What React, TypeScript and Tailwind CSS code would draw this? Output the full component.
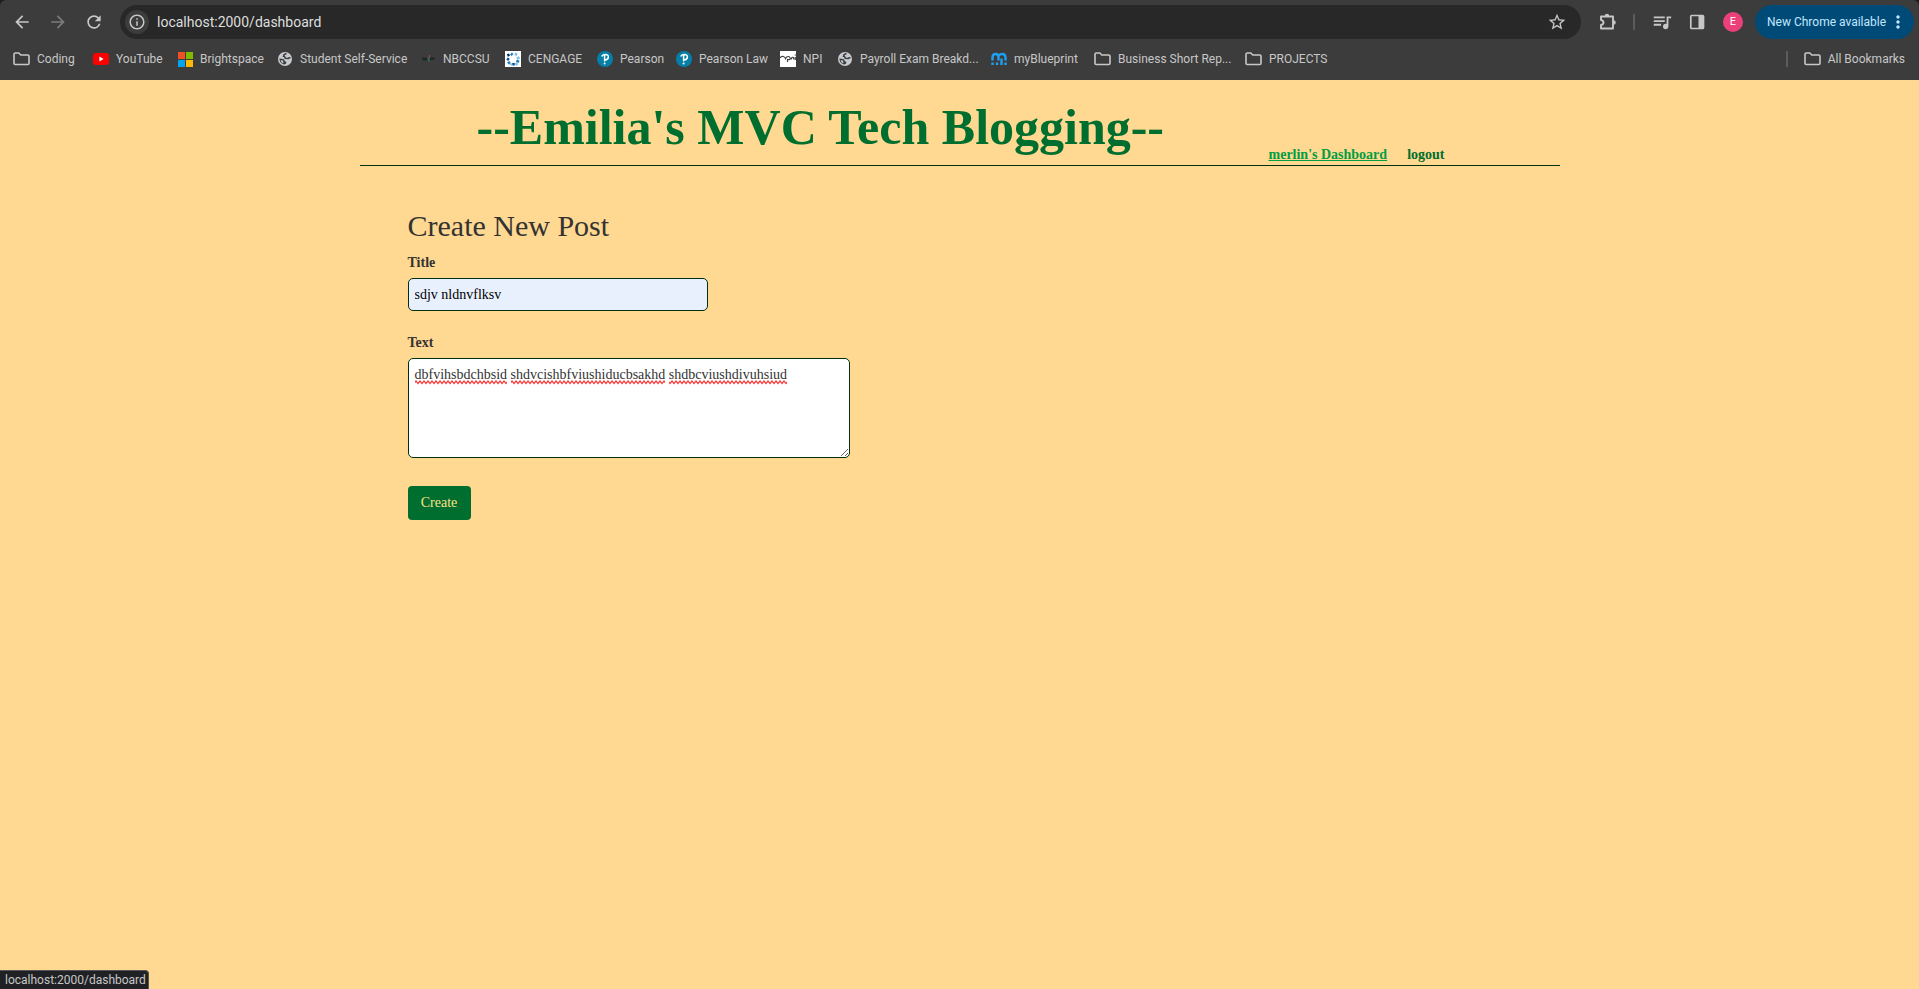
import { ReactNode } from "react";
import { MdArrowBack, MdArrowForward, MdRefresh, MdInfoOutline, MdStarOutline, MdQueueMusic, MdMoreVert } from "react-icons/md";

function Folder() {
  return (
    <svg viewBox="0 0 17 14" className="h-[14px] w-[17px]" fill="none" stroke="#c7c7c7" strokeWidth="1.6">
      <path d="M1 2.2Q1 1 2.2 1H5.8L7.800 3H14.8Q16 3 16 4.2V11.3Q16 12.500 14.800 12.500H2.2Q1 12.500 1 11.300Z" />
    </svg>
  );
}

function YouTube() {
  return (
    <svg viewBox="0 0 16 12" className="h-3 w-4">
      <rect width="16" height="12" rx="3" fill="#f00" />
      <path d="M6.4 3.5 10.6 6 6.4 8.5Z" fill="#fff" />
    </svg>
  );
}

function Microsoft() {
  return (
    <svg viewBox="0 0 15 15" className="h-[15px] w-[15px]">
      <rect width="7" height="7" fill="#f25022" />
      <rect x="8" width="7" height="7" fill="#7fba00" />
      <rect y="8" width="7" height="7" fill="#00a4ef" />
      <rect x="8" y="8" width="7" height="7" fill="#ffb900" />
    </svg>
  );
}

function Globe() {
  return (
    <svg viewBox="0 0 16 16" className="h-4 w-4">
      <circle cx="8" cy="8" r="7" fill="#c7cacf" />
      <path d="M9.500 2.800Q6.800 3 6.500 5.200 8.300 5.600 8.300 7.400L11 7.600Q12.400 6.200 13.300 7.200" fill="none" stroke="#3c3c3c" strokeWidth="1.500" />
      <path d="M2.400 7.600 6 8Q7.800 8.300 7.800 10.200 9.700 10.200 9.400 11.700 8.800 13.200 7 13.400 2.800 12.600 2.400 7.600Z" fill="#3c3c3c" />
      <path d="M3.600 9.200 6 9.600 6.400 11.400 6 12.400Q4.200 11.600 3.600 9.200Z" fill="#c7cacf" />
    </svg>
  );
}

function Nbcc() {
  return (
    <svg viewBox="0 0 16 16" className="h-4 w-4">
      <path d="M2 6.500H8V9.500H3ZM10 6.500H15L14 9H10Z" fill="#242424" />
      <path d="M7.500 5.500 9.500 7V11.500L7.500 9Z" fill="#267055" />
      <path d="M9.500 4V7" stroke="#a8433a" />
    </svg>
  );
}

function Cengage() {
  return (
    <svg viewBox="0 0 16 16" className="h-4 w-4">
      <rect width="16" height="16" fill="#fff" />
      <g strokeWidth="2.6">
        <path d="M2.300 4.500 4.500 3.600" stroke="#06335f" />
        <path d="M2 7.500 4 8.800M8.500 12V14.500" stroke="#0a4d8c" />
        <path d="M6 2.500 7.500 4M11.500 9.500 14 11M3 12.500 5 11" stroke="#1b75bb" />
        <path d="M10.500 4.500 11.500 2M11.800 7.500 14.500 6.500M5.500 14 6.500 12.500M10.500 12 12.500 14" stroke="#7cc4ea" />
      </g>
    </svg>
  );
}

function Pearson() {
  return (
    <svg viewBox="0 0 16 16" className="h-4 w-4">
      <circle cx="8" cy="8" r="8" fill="#057fa8" />
      <path d="M4.800 5.500Q5.500 3.500 8.500 3.500 11.500 3.600 11.400 6.100 11.200 8.700 7.800 8.900M7.600 4.500V10.500" fill="none" stroke="#fff" strokeWidth="1.500" />
      <circle cx="7.600" cy="12.500" r="1" fill="#fff" />
    </svg>
  );
}

function Npi() {
  return (
    <svg viewBox="0 0 16 16" className="h-4 w-4">
      <rect width="16" height="16" fill="#fff" />
      <path d="M0 7Q1.500 5 3.500 5.500 5 6 5.500 7.500 6.500 5.300 8.500 5.500 10.500 6 10 8 9.500 9 7.500 8.500V11M11 8.500Q12 5.500 13.500 6.500L14 8.500M15.300 6V9M15.300 3.500V4.500" fill="none" stroke="#444" strokeWidth="1.200" />
    </svg>
  );
}

function MyBlueprint() {
  return (
    <svg viewBox="0 0 16 14" className="h-[14px] w-4" fill="none" stroke="#1da1f2" strokeWidth="2.400">
      <path d="M1.500 8.500V5.500Q1.500 2 4.500 2T7.500 5V8.500M7.500 4Q8.500 2 11 2 14.500 2 14.500 5.500V8.500M1.500 10.500V13M6 10.500V13M10.500 6.500V13M14.500 10.500V13" />
    </svg>
  );
}

function Puzzle() {
  return (
    <svg viewBox="0 0 20 20" className="h-5 w-5">
      <path d="M3 4.500H15V16.500H3V13Q5.500 12.500 5.500 10.500T3 8Z" fill="none" stroke="#c7c7c7" strokeWidth="1.900" strokeLinejoin="round" />
      <path d="M6.800 4.200Q6.800 1.800 9 1.800T11.200 4.200ZM15.400 8.300Q17.800 8.300 17.800 10.500T15.400 12.700Z" fill="#c7c7c7" />
    </svg>
  );
}

function SidePanel() {
  return (
    <svg viewBox="0 0 16 16" className="h-4 w-4">
      <rect x="1.800" y="1.500" width="12.700" height="13" rx="0.800" fill="none" stroke="#c7c7c7" strokeWidth="1.700" />
      <path d="M9.500 1.500H14.500V14.500H9.500Z" fill="#c7c7c7" />
    </svg>
  );
}

function Bookmark({ icon, label, width }: { icon: ReactNode; label: string; width: string }) {
  return (
    <a href="#" className={`flex shrink-0 items-center gap-[7px] whitespace-nowrap ${width}`}>
      <span className="flex min-w-4 shrink-0 justify-center">{icon}</span>
      {label}
    </a>
  );
}

function Browser() {
  return (
    <div className="bg-[#1c1c1c]">
      <header className="h-20 rounded-t-md bg-[#3c3c3c] font-[Roboto,sans-serif] text-[#c7c7c7]">
        <div className="flex items-center pt-[5px] pr-[5px] pl-3">
          <div className="flex w-[108px] gap-4">
            <button aria-label="Back"><MdArrowBack className="h-5 w-5" /></button>
            <button aria-label="Forward" className="text-[#7c7c7c]"><MdArrowForward className="h-5 w-5" /></button>
            <button aria-label="Reload"><MdRefresh className="h-5 w-5" /></button>
          </div>
          <div className="flex h-[34px] grow items-center gap-2 rounded-full bg-[#282828] pr-[14px] pl-[5px]">
            <button aria-label="Site information" className="flex h-6 w-6 items-center justify-center rounded-full bg-[#3c3c3c]">
              <MdInfoOutline className="h-[18px] w-[18px]" />
            </button>
            <input aria-label="Address" defaultValue="localhost:2000/dashboard" className="grow bg-transparent text-sm text-[#dedede] outline-none" />
            <button aria-label="Bookmark this page"><MdStarOutline className="h-5 w-5" /></button>
          </div>
          <div className="flex items-center pl-[17px]">
            <button aria-label="Extensions"><Puzzle /></button>
            <span className="mr-4 ml-[15px] h-4 w-[2px] bg-[#5c5c5c]" />
            <button aria-label="Media"><MdQueueMusic className="h-[22px] w-[22px]" /></button>
            <button aria-label="Side panel" className="ml-4"><SidePanel /></button>
            <button className="mr-3 ml-[18px] flex h-5 w-5 items-center justify-center rounded-full bg-[#ec407a] text-[11px] text-white">E</button>
            <button className="flex h-[34px] w-[159px] items-center justify-between rounded-full bg-[#004a77] pr-[6px] pl-3 text-xs whitespace-nowrap text-[#c2e7ff]">
              New Chrome available
              <MdMoreVert className="h-5 w-5" />
            </button>
          </div>
        </div>
        <nav aria-label="Bookmarks" className="flex h-10 items-center pr-[14px] pl-[13px] text-xs">
          <Bookmark icon={<Folder />} label="Coding" width="w-20" />
          <Bookmark icon={<YouTube />} label="YouTube" width="w-[84px]" />
          <Bookmark icon={<Microsoft />} label="Brightspace" width="w-[100px]" />
          <Bookmark icon={<Globe />} label="Student Self-Service" width="w-[143px]" />
          <Bookmark icon={<Nbcc />} label="NBCCSU" width="w-[85px]" />
          <Bookmark icon={<Cengage />} label="CENGAGE" width="w-[92px]" />
          <Bookmark icon={<Pearson />} label="Pearson" width="w-[79px]" />
          <Bookmark icon={<Pearson />} label="Pearson Law" width="w-[104px]" />
          <Bookmark icon={<Npi />} label="NPI" width="w-[57px]" />
          <Bookmark icon={<Globe />} label="Payroll Exam Breakd..." width="w-[154px]" />
          <Bookmark icon={<MyBlueprint />} label="myBlueprint" width="w-[103px]" />
          <Bookmark icon={<Folder />} label="Business Short Rep..." width="w-[151px]" />
          <Bookmark icon={<Folder />} label="PROJECTS" width="w-[90px]" />
          <span className="mr-4 ml-auto h-4 w-[2px] bg-[#5c5c5c]" />
          <Bookmark icon={<Folder />} label="All Bookmarks" width="w-auto" />
        </nav>
      </header>
    </div>
  );
}

function SpellingMarks() {
  return (
    <svg className="pointer-events-none absolute top-[22px] left-0 h-[5px] w-[400px]" aria-hidden="true">
      <defs>
        <pattern id="wave" width="4" height="5" patternUnits="userSpaceOnUse">
          <path d="M-1 2 0 1 2 3.500 4 1 5 2" fill="none" stroke="#f33" strokeWidth="1.200" />
        </pattern>
      </defs>
      <rect x="7" width="92" height="5" fill="url(#wave)" />
      <rect x="103" width="154" height="5" fill="url(#wave)" />
      <rect x="261" width="118" height="5" fill="url(#wave)" />
    </svg>
  );
}

export default function App() {
  return (
    <div className="relative min-h-screen bg-[#ffd891] font-['Liberation_Serif',serif] text-sm text-[#333]">
      <Browser />
      <div className="mx-auto max-w-[1200px]">
        <header className="flex items-end border-b border-[#00300f] pt-[17px]">
          <h1 className="w-[909px] pb-[7px] pl-[117px] text-[50px] leading-[61px] font-bold whitespace-nowrap text-[#006e2e]">--Emilia's MVC Tech Blogging--</h1>
          <nav className="flex gap-5 font-bold">
            <a href="#" className="text-[#009e42] underline">merlin's Dashboard</a>
            <a href="#" className="text-[#006e2e]">logout</a>
          </nav>
        </header>
        <main className="px-12 pt-[38px]">
          <h2 className="text-[30px] leading-[44px]">Create New Post</h2>
          <form onSubmit={(e) => e.preventDefault()} className="pt-[5px]">
            <label htmlFor="title" className="mb-[5px] block font-bold">Title</label>
            <input id="title" defaultValue="sdjv nldnvflksv" className="mb-[22px] block h-[33px] w-[300px] rounded-[5px] border border-[#00300f] bg-[#e8f0fe] px-[6px] text-black" />
            <label htmlFor="text" className="mb-[5px] block font-bold">Text</label>
            <div className="relative">
              <textarea id="text" spellCheck={false} defaultValue="dbfvihsbdchbsid shdvcishbfviushiducbsakhd shdbcviushdivuhsiud" className="block h-[100px] w-[442px] rounded-[5px] border border-[#00300f] bg-white px-[6px] py-[6px]" />
              <SpellingMarks />
            </div>
            <button className="mt-7 h-[34px] w-[63px] rounded bg-[#006e2e] text-[#ffe08a]">Create</button>
          </form>
        </main>
      </div>
      <div className="absolute bottom-0 left-0 h-[19px] w-[149px] rounded-tr border-t border-r border-[#555] bg-[#202124] pl-[5px] font-[Roboto,sans-serif] text-xs leading-[19px] text-[#c7c7c7]">localhost:2000/dashboard</div>
    </div>
  );
}
